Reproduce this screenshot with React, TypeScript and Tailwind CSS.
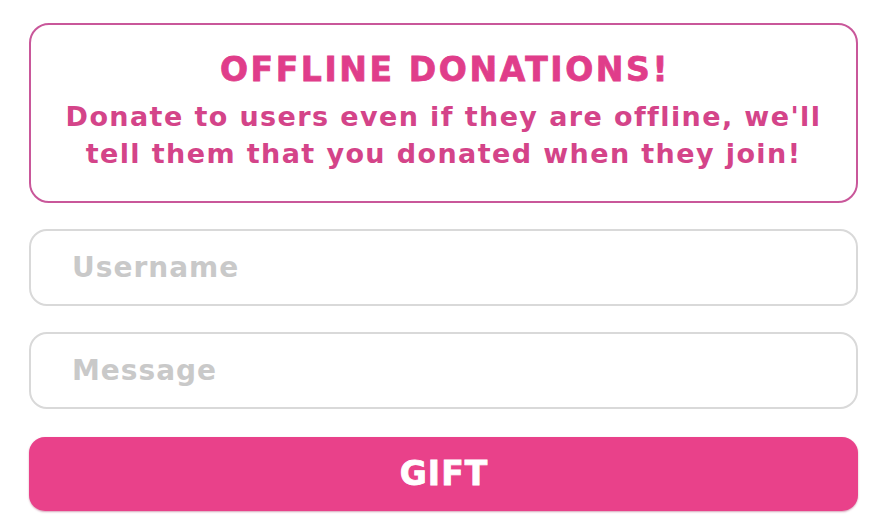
import React from "react";

export default function App() {
  const font = { fontFamily: "'DejaVu Sans', Inter, 'Liberation Sans', sans-serif" };
  return (
    <div className="w-[887px] h-[528px] bg-white px-[29px] pt-[23px] flex flex-col" style={font}>
      <div className="h-[180px] rounded-[20px] border-2 border-[#c9579a] flex flex-col items-center pt-[27px]">
        <div className="text-[33px] leading-[36px] font-bold tracking-[2.6px] text-[#e03d8a] mb-[10px] pl-[3px] [-webkit-text-stroke:0.8px_#e03d8a]">OFFLINE DONATIONS!</div>
        <div className="text-[27px] leading-[37px] font-bold text-[#d44489] text-center tracking-[1.4px]">
          Donate to users even if they are offline, we'll
          <br />
          tell them that you donated when they join!
        </div>
      </div>
      <div className="mt-[26px] h-[77px] rounded-[18px] border-2 border-[#d9d9d9] flex items-center pl-[41px]">
        <span className="text-[28px] font-bold text-[#c9c9c9] tracking-[1px]">Username</span>
      </div>
      <div className="mt-[26px] h-[77px] rounded-[18px] border-2 border-[#d9d9d9] flex items-center pl-[41px]">
        <span className="text-[28px] font-bold text-[#c9c9c9] tracking-[1px]">Message</span>
      </div>
      <button className="mt-[28px] h-[74px] rounded-[16px] bg-[#e9418a] flex items-center justify-center shadow-[0_1px_2px_rgba(150,30,80,0.4)]">
        <span className="text-[33px] font-bold text-white tracking-[1px] pl-[1px] [-webkit-text-stroke:0.8px_#ffffff]">GIFT</span>
      </button>
    </div>
  );
}
